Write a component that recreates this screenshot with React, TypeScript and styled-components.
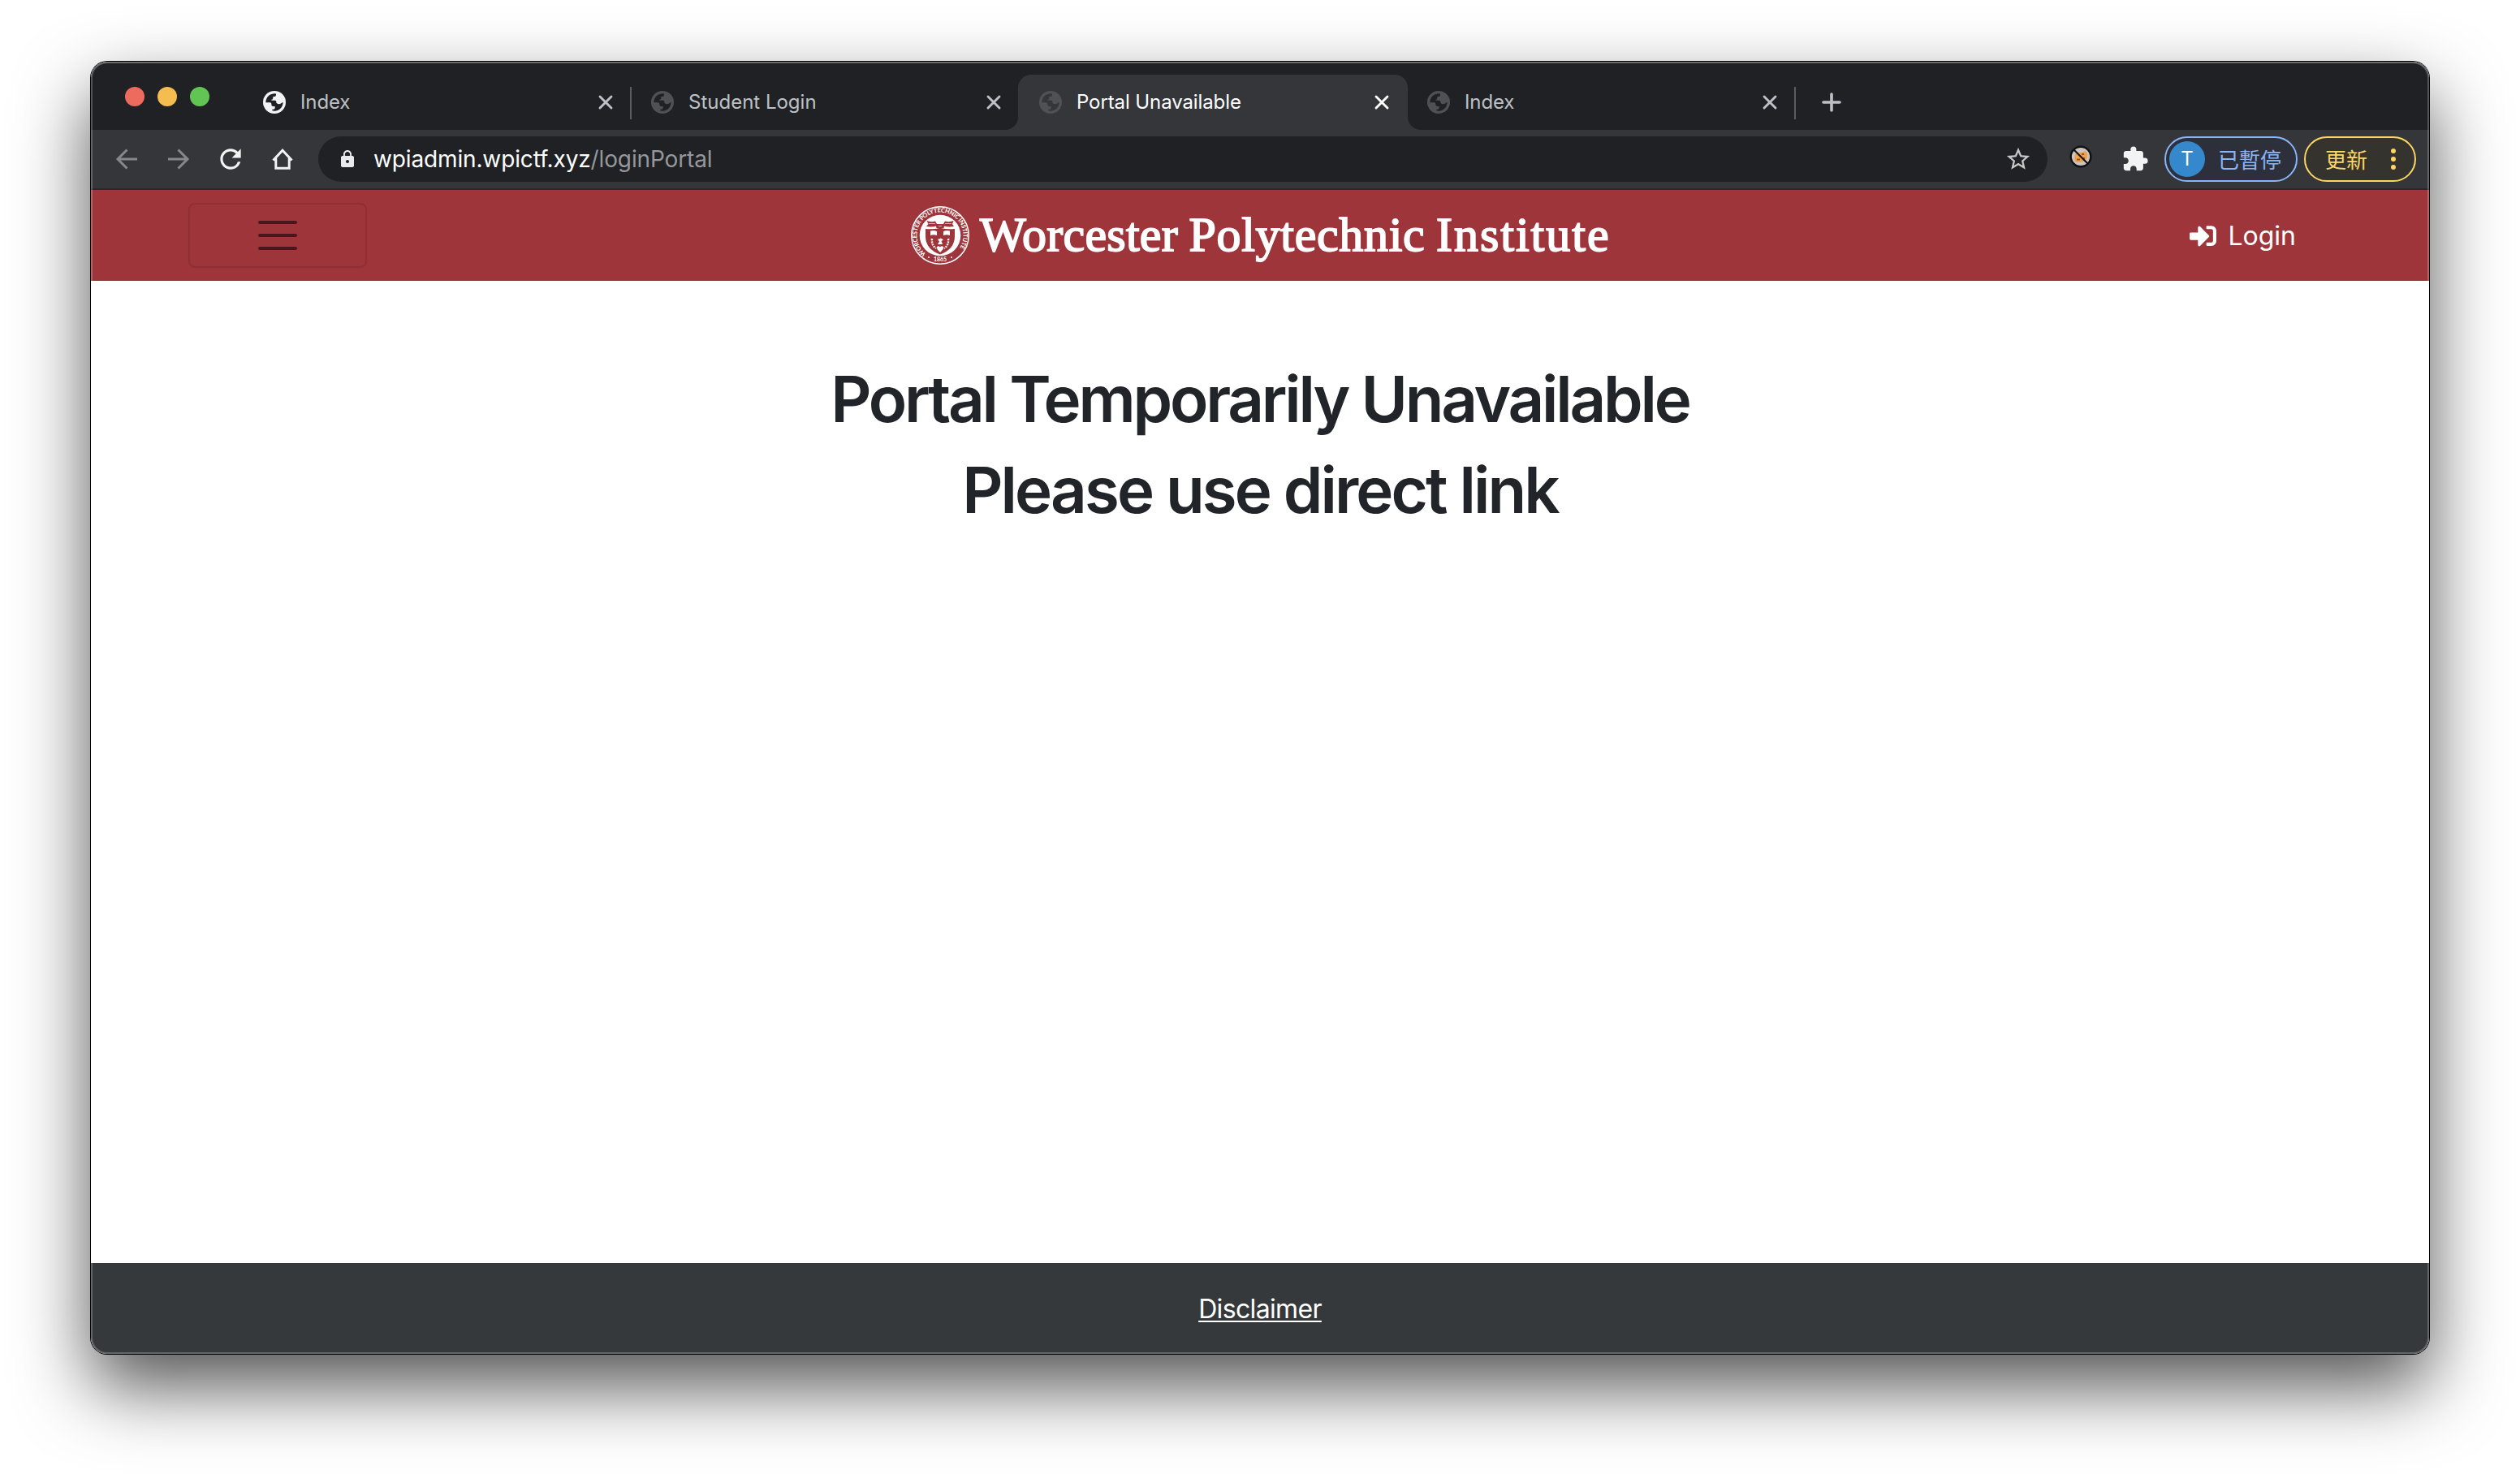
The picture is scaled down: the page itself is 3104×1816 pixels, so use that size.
import React from "react";
import styled, { createGlobalStyle, css } from "styled-components";
import { FaSignInAlt } from "react-icons/fa";
import { MdExtension, MdStarBorder, MdLock, MdRefresh } from "react-icons/md";

const GlobalStyle = createGlobalStyle`
  *, *::before, *::after { box-sizing: border-box; }
  html, body { margin: 0; padding: 0; background: #fff; }
  body {
    font-family: Inter, "Noto Sans CJK TC", sans-serif;
    -webkit-font-smoothing: antialiased;
  }
`;

const Desktop = styled.div`
  width: 3104px;
  height: 1816px;
  padding: 76px 112px 148px;
  overflow: hidden;
  background: #fff;
`;

const BrowserWindow = styled.div`
  position: relative;
  width: 2880px;
  height: 1592px;
  display: flex;
  flex-direction: column;
  border-radius: 20px;
  overflow: hidden;
  background: #fff;
  &::after {
    content: "";
    position: absolute;
    inset: 0;
    border-radius: 20px;
    pointer-events: none;
    box-shadow: inset 0 0 0 2px rgba(255, 255, 255, 0.23), inset 0 2px 0 rgba(255, 255, 255, 0.14);
  }
`;

const WindowShadow = styled.div`
  border-radius: 20px;
  box-shadow: 0 0 0 1px #000, 0 40px 90px rgba(0, 0, 0, 0.68);
`;

const TabStrip = styled.div`
  height: 84px;
  flex: none;
  display: flex;
  background: #202124;
`;

const TrafficLights = styled.div`
  width: 188px;
  padding: 31px 0 0 42px;
  display: flex;
  gap: 16px;
`;

const Light = styled.span<{ $color: string }>`
  width: 24px;
  height: 24px;
  border-radius: 50%;
  background: ${(p) => p.$color};
`;

const Tab = styled.div<{ $active?: boolean; $divider?: boolean }>`
  position: relative;
  width: 478px;
  height: 68px;
  margin-top: 16px;
  padding: 0 22px 0 24px;
  display: flex;
  align-items: center;
  color: ${(p) => (p.$active ? "#fff" : "#bdc1c6")};
  ${(p) =>
    p.$divider &&
    css`
      &::after {
        content: "";
        position: absolute;
        right: 0;
        top: 15px;
        width: 2px;
        height: 40px;
        background: #5b5c5f;
      }
    `}
  ${(p) =>
    p.$active &&
    css`
      background: #35363a;
      border-radius: 16px 16px 0 0;
      width: 480px;
      margin-left: -2px;
      padding-left: 26px;
      &::before,
      &::after {
        content: "";
        position: absolute;
        bottom: 0;
        width: 16px;
        height: 16px;
      }
      &::before {
        left: -16px;
        background: radial-gradient(circle at 0 0, transparent 15.5px, #35363a 16.5px);
      }
      &::after {
        right: -16px;
        background: radial-gradient(circle at 100% 0, transparent 15.5px, #35363a 16.5px);
      }
    `}
`;

const TabTitle = styled.span<{ $spacing: number }>`
  flex: 1;
  margin-left: 18px;
  font-size: 24px;
  line-height: 34px;
  letter-spacing: ${(p) => p.$spacing}px;
  white-space: nowrap;
`;

const GlobeSvg = styled.svg`
  width: 28px;
  height: 28px;
  flex: none;
`;

const CloseSvg = styled.svg`
  width: 20px;
  height: 20px;
  flex: none;
`;

const NewTab = styled.svg`
  width: 28px;
  height: 28px;
  margin: 36px 0 0 30px;
`;

const Toolbar = styled.div`
  height: 74px;
  flex: none;
  display: flex;
  align-items: center;
  padding: 0 8px 0 28px;
  background: #35363a;
  border-bottom: 2px solid #28292b;
`;

const NavButtons = styled.div`
  width: 252px;
  flex: none;
  display: flex;
  gap: 32px;
`;

const NavIcon = styled.svg<{ $dim?: boolean }>`
  width: 32px;
  height: 32px;
  fill: none;
  stroke: ${(p) => (p.$dim ? "#86878a" : "#f1f3f4")};
  stroke-width: 3px;
`;

const ReloadIcon = styled(MdRefresh)`
  width: 38px;
  height: 38px;
  margin: -3px;
  color: #f1f3f4;
`;

const Omnibox = styled.div`
  width: 2130px;
  flex: none;
  height: 56px;
  border-radius: 28px;
  background: #202124;
  display: flex;
  align-items: center;
  padding: 0 19px 0 23px;
`;

const Lock = styled(MdLock)`
  width: 26px;
  height: 24px;
  color: #e8eaed;
`;

const Url = styled.span`
  flex: 1;
  margin-left: 19px;
  font-size: 28px;
  line-height: 40px;
  letter-spacing: -0.14px;
  color: #fff;
`;

const UrlPath = styled.span`
  color: #95979a;
`;

const Star = styled(MdStarBorder)`
  width: 34px;
  height: 34px;
  color: #c6c7c9;
`;

const Extensions = styled.div`
  width: 144px;
  flex: none;
  display: flex;
  align-items: center;
  padding: 0 0 0 27px;
  gap: 36px;
`;

const CookieIcon = styled.svg`
  width: 28px;
  height: 28px;
  margin-top: -6px;
`;

const Puzzle = styled(MdExtension)`
  width: 34px;
  height: 34px;
  color: #f1f3f4;
`;

const Pill = styled.div<{ $color: string; $bg: string; $width: number; $pad: string }>`
  width: ${(p) => p.$width}px;
  flex: none;
  height: 56px;
  display: flex;
  align-items: center;
  padding: ${(p) => p.$pad};
  border: 2px solid ${(p) => p.$color};
  border-radius: 28px;
  background: ${(p) => p.$bg};
  color: ${(p) => p.$color};
  font: 400 26px/36px "Noto Sans CJK TC", sans-serif;
  margin-right: 8px;
  white-space: nowrap;
`;

const Avatar = styled.span`
  width: 44px;
  height: 44px;
  margin-right: 16px;
  border-radius: 50%;
  background: #3688cc;
  color: #fff;
  font: 400 24px/44px Inter, sans-serif;
  text-align: center;
`;

const Dots = styled.svg`
  width: 6px;
  height: 26px;
  margin-left: 29px;
  fill: currentColor;
`;

const SiteHeader = styled.header`
  height: 112px;
  flex: none;
  display: grid;
  grid-template-columns: 1010px 860px 1010px;
  align-items: center;
  background: #9e353a;
`;

const MenuButton = styled.button`
  width: 220px;
  height: 80px;
  margin-left: 120px;
  padding: 0;
  border: 2px solid rgba(0, 0, 0, 0.1);
  border-radius: 8px;
  background: transparent;
  display: flex;
  flex-direction: column;
  align-items: center;
  justify-content: center;
  gap: 12px;
`;

const MenuLine = styled.span`
  width: 48px;
  height: 4px;
  border-radius: 2px;
  background: #46171b;
`;

const Brand = styled.div`
  display: flex;
  align-items: center;
  color: #fff;
`;

const SealSvg = styled.svg`
  width: 72px;
  height: 72px;
  flex: none;
`;

const BrandName = styled.span`
  margin: -2px 0 0 13px;
  font: 400 60px/80px "Liberation Serif", serif;
  word-spacing: -1.5px;
  white-space: nowrap;
  -webkit-text-stroke: 1.8px #fff;
`;

const BrandWord = styled.span<{ $spacing: number }>`
  letter-spacing: ${(p) => p.$spacing}px;
`;

const LoginLink = styled.a`
  display: flex;
  align-items: center;
  justify-content: flex-end;
  margin-right: 164px;
  padding-top: 2px;
  color: #fff;
  font-size: 32px;
  line-height: 48px;
`;

const LoginIcon = styled(FaSignInAlt)`
  width: 33px;
  height: 33px;
  margin: -2px 14px 0 0;
`;

const Main = styled.main`
  flex: 1;
  padding-top: 98px;
  text-align: center;
  background: #fff;
`;

const Heading = styled.h1<{ $spacing: number }>`
  margin: 0 0 16px;
  font-size: 78px;
  font-weight: 560;
  line-height: 96px;
  letter-spacing: ${(p) => p.$spacing}px;
  color: #212529;
`;

const SiteFooter = styled.footer`
  height: 112px;
  flex: none;
  display: flex;
  justify-content: center;
  align-items: center;
  background: #35393b;
`;

const Disclaimer = styled.a`
  padding-top: 2px;
  color: #fff;
  font-size: 32px;
  line-height: 48px;
  letter-spacing: -0.65px;
  text-decoration: underline;
  text-decoration-thickness: 2px;
  text-underline-offset: 3px;
  text-decoration-skip-ink: none;
`;

const Globe = ({ color, hole }: { color: string; hole: string }) => (
  <GlobeSvg viewBox="18 18 84 84">
    <circle cx="60" cy="60" r="42" fill={color} />
    <path
      fill={hole}
      d="M28 61 A32 32 0 0 1 66 28.500 V33 Q66 39 60 39 H55 V44 Q55 50 50 50 H49 V53 H62 Q67 53 67 58 V62 Q76 71 85 64 Q88 61 92 60 A32 32 0 0 1 52 91 V86 H56 Q62 86 62 80 V75 H55 Q49 75 49 69 V66 Q49 61 43 61 Z"
    />
  </GlobeSvg>
);

const Close = () => (
  <CloseSvg viewBox="0 0 20 20">
    <path d="M3 3 17 17M17 3 3 17" stroke="currentColor" strokeWidth="2.900" strokeLinecap="round" />
  </CloseSvg>
);

const Seal = () => (
  <SealSvg viewBox="0 0 72 72">
    <defs>
      <path id="ring" d="M18.500 58.500 A28.500 28.500 0 1 1 53.500 58.500" />
    </defs>
    <circle cx="36" cy="36" r="35.200" fill="none" stroke="#fff" strokeWidth="1.500" />
    <circle cx="36" cy="36" r="25.300" fill="#fff" />
    <text fill="#fff" fontSize="7.400" fontWeight="700" fontFamily="Lato, sans-serif">
      <textPath href="#ring" textLength="131">WORCESTER POLYTECHNIC INSTITUTE</textPath>
    </text>
    <text x="36" y="68.200" fill="#fff" fontSize="7" fontWeight="700" fontFamily="Lato, sans-serif" textAnchor="middle">
      1865
    </text>
    <circle cx="22" cy="63" r="1" fill="#fff" />
    <circle cx="50" cy="63" r="1" fill="#fff" />
    <g fill="#9e353a">
      <path d="M19.500 18 Q25 20 30 18.500 L32 22 H40 L42 18.500 Q47 20 52.500 18 L51 22 L53 25 Q46 26 41 24.500 L40.500 27 H31.500 L31 24.500 Q26 26 19 25 L21.500 22 Z" />
      <path d="M18 28 Q27 29 36 26.800 Q45 29 54 28 V37 Q54 53 36 59.500 Q18 53 18 37 Z" />
    </g>
    <g fill="#fff">
      <path d="M24 30.500 Q28 29.500 32 31 V36 Q28 34.700 24 36 Z M40 31 Q44 29.500 48 30.500 V36 Q44 34.700 40 36 Z" />
      <path d="M33 41 L37 39.500 L40 41.500 L37.500 43 L39 47 H33 L35 43.500 Z" />
      <path d="M36 57 Q31.500 53 32 50.500 Q33.500 48 36 50.500 Q38.500 48 40 50.500 Q40.500 53 36 57 Z" />
    </g>
    <path d="M26 40 Q25 48 31 52 M46 40 Q47 48 41 52" fill="none" stroke="#fff" strokeWidth="2.400" strokeDasharray="2 1.200" />
    <path d="M22 21.500 H30 M42 21.500 H50 M34 24.500 H38" stroke="#fff" strokeWidth="1" opacity="0.6" />
  </SealSvg>
);

const Cookie = () => (
  <CookieIcon viewBox="0 0 28 28">
    <circle cx="14" cy="14" r="12.300" fill="#c9c6c3" stroke="#111" strokeWidth="2.400" />
    <path d="M7 11 Q10 8 14 9 L20 7 Q23 10 22 15 Q20 20 14 21 L8 21 Q5 18 7 11Z" fill="#f2a04a" />
    <path d="M9 17.500 H13 M15 11 H18 M17 16 H19" stroke="#8a5a2c" strokeWidth="2" />
    <path d="M5.500 5.500 22.500 22.500" stroke="#111" strokeWidth="2.200" />
  </CookieIcon>
);

const tabs = [
  { title: "Index", color: "#f1f3f4", spacing: -0.1, divider: true },
  { title: "Student Login", color: "#505155", spacing: 0 },
  { title: "Portal Unavailable", color: "#505155", spacing: -0.1, active: true },
  { title: "Index", color: "#505155", spacing: -0.1, divider: true },
];

export default function App() {
  return (
    <>
      <GlobalStyle />
      <Desktop>
        <WindowShadow>
          <BrowserWindow>
            <TabStrip>
              <TrafficLights>
                <Light $color="#ed6a5e" />
                <Light $color="#f5bd4f" />
                <Light $color="#61c454" />
              </TrafficLights>
              {tabs.map((t, i) => (
                <Tab key={i} $active={t.active} $divider={t.divider}>
                  <Globe color={t.color} hole={t.active ? "#35363a" : "#202124"} />
                  <TabTitle $spacing={t.spacing}>{t.title}</TabTitle>
                  <Close />
                </Tab>
              ))}
              <NewTab viewBox="0 0 28 28">
                <path d="M14 4V24M4 14H24" stroke="#bdc1c6" strokeWidth="3.600" strokeLinecap="round" />
              </NewTab>
            </TabStrip>
            <Toolbar>
              <NavButtons>
                <NavIcon $dim viewBox="0 0 32 32">
                  <path d="M29 16H5M16.500 4.500 5 16 16.500 27.500" />
                </NavIcon>
                <NavIcon $dim viewBox="0 0 32 32">
                  <path d="M3 16H27M15.500 4.500 27 16 15.500 27.500" />
                </NavIcon>
                <ReloadIcon />
                <NavIcon viewBox="0 0 32 32">
                  <path d="M4.500 17.500 16 5.300 27.500 17.500M7.800 15V27.200H24.200V15" />
                </NavIcon>
              </NavButtons>
              <Omnibox>
                <Lock />
                <Url>
                  wpiadmin.wpictf.xyz<UrlPath>/loginPortal</UrlPath>
                </Url>
                <Star />
              </Omnibox>
              <Extensions>
                <Cookie />
                <Puzzle />
              </Extensions>
              <Pill $color="#8ab4f8" $bg="#2d303a" $width={164} $pad="0 0 0 4px">
                <Avatar>T</Avatar>
                已暫停
              </Pill>
              <Pill $color="#fdd663" $bg="#35332e" $width={138} $pad="0 0 0 24px">
                更新
                <Dots viewBox="0 0 6 26">
                  <circle cx="3" cy="3" r="3" />
                  <circle cx="3" cy="13" r="3" />
                  <circle cx="3" cy="23" r="3" />
                </Dots>
              </Pill>
            </Toolbar>
            <SiteHeader>
              <MenuButton aria-label="Menu">
                <MenuLine />
                <MenuLine />
                <MenuLine />
              </MenuButton>
              <Brand>
                <Seal />
                <BrandName>
                  <BrandWord $spacing={0.25}>Worcester</BrandWord>{" "}
                  <BrandWord $spacing={0.7}>Polytechnic</BrandWord>{" "}
                  <BrandWord $spacing={2}>Institute</BrandWord>
                </BrandName>
              </Brand>
              <LoginLink>
                <LoginIcon />
                Login
              </LoginLink>
            </SiteHeader>
            <Main>
              <Heading $spacing={-3.2}>Portal Temporarily Unavailable</Heading>
              <Heading $spacing={-2.9}>Please use direct link</Heading>
            </Main>
            <SiteFooter>
              <Disclaimer>Disclaimer</Disclaimer>
            </SiteFooter>
          </BrowserWindow>
        </WindowShadow>
      </Desktop>
    </>
  );
}
